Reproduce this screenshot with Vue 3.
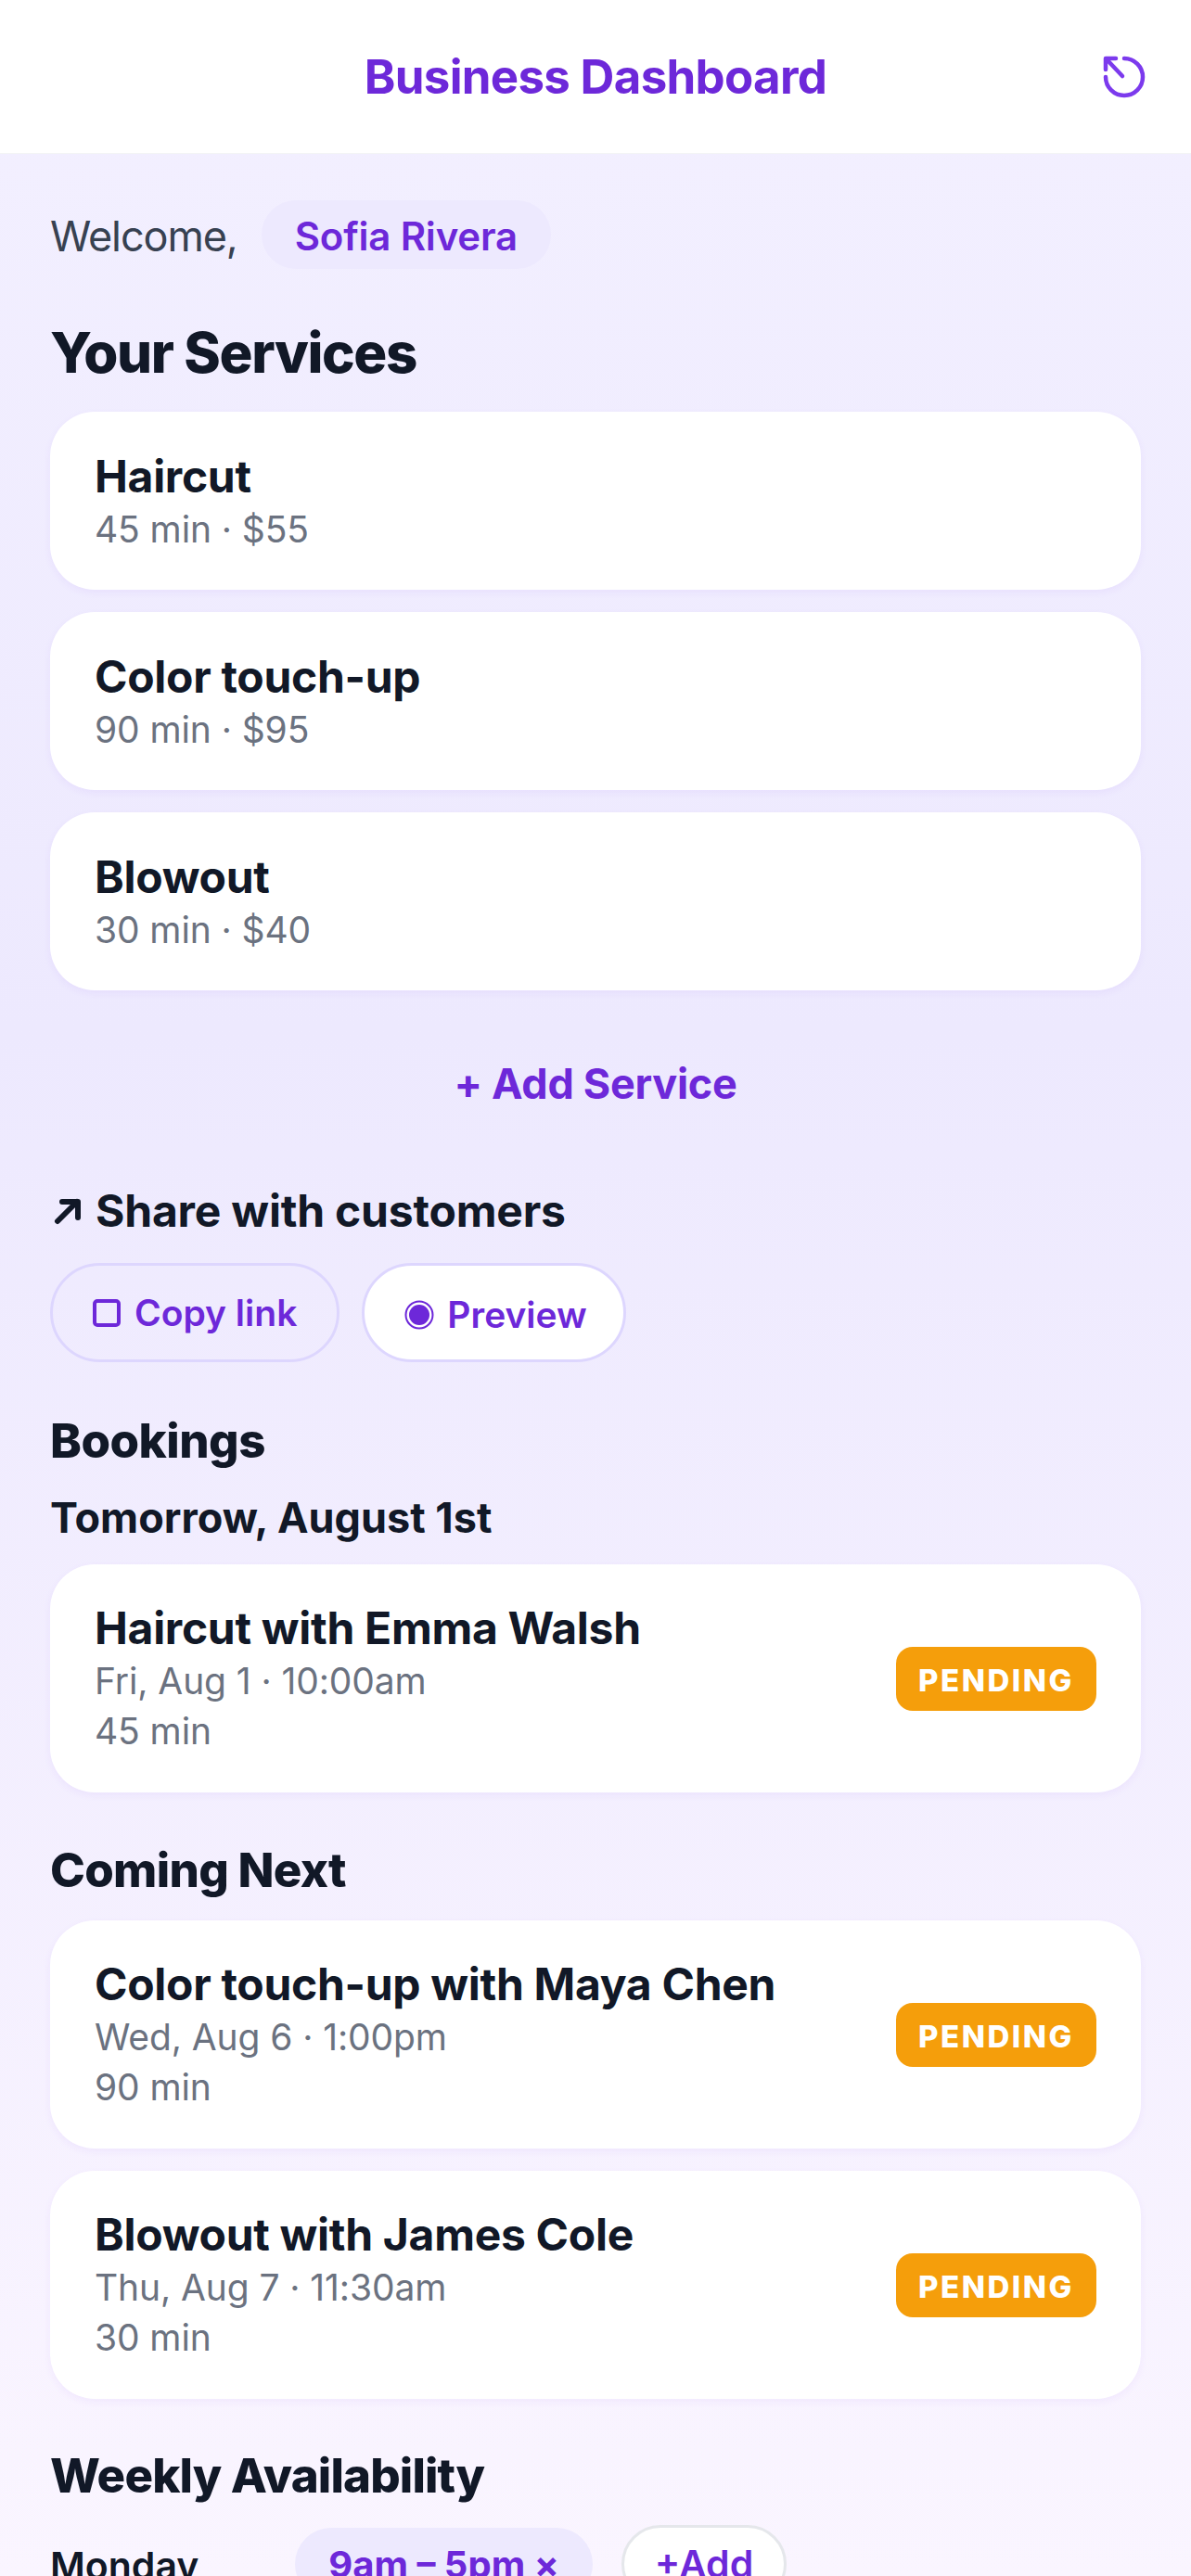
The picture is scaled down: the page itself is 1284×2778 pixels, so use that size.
<script setup>
const services = [
  { name: 'Haircut', meta: '45 min · $55' },
  { name: 'Color touch-up', meta: '90 min · $95' },
  { name: 'Blowout', meta: '30 min · $40' }
]

const nextBookings = [
  { title: 'Color touch-up with Maya Chen', date: 'Wed, Aug 6 · 1:00pm', length: '90 min' },
  { title: 'Blowout with James Cole', date: 'Thu, Aug 7 · 11:30am', length: '30 min' }
]
</script>

<template>
  <div class="page">
    <header class="topbar">
      <div class="topbar-title">Business Dashboard</div>
      <svg class="history" viewBox="0 0 48 48" fill="none" stroke="#7c3aed" stroke-width="4.500" stroke-linecap="round" stroke-linejoin="round">
        <path d="M24 5a20 20 0 1 1-20 20" />
        <path d="M22 24L5 6" />
        <path d="M4 17V5h11" />
      </svg>
    </header>

    <main class="content">
      <div class="welcome">
        <span class="welcome-label">Welcome,</span>
        <span class="name-pill">Sofia Rivera</span>
      </div>

      <h2 class="services-title">Your Services</h2>
      <div class="stack">
        <div class="card service" v-for="s in services" :key="s.name">
          <div class="card-title">{{ s.name }}</div>
          <div class="card-sub">{{ s.meta }}</div>
        </div>
      </div>

      <div class="add-service">+ Add Service</div>

      <div class="share-title">
        <svg class="share-arrow" viewBox="0 0 30 30" fill="none" stroke="#111827" stroke-width="6" stroke-linecap="round" stroke-linejoin="round">
          <path d="M4 26L25 5" />
          <path d="M9 5h17v17" />
        </svg>
        Share with customers
      </div>
      <div class="share-actions">
        <div class="share-btn">
          <svg class="btn-icon" viewBox="0 0 30 30" fill="none" stroke="#6d28d9" stroke-width="4">
            <rect x="2" y="2" width="26" height="26" rx="3" />
          </svg>
          Copy link
        </div>
        <div class="share-btn solid">
          <svg class="btn-icon" viewBox="0 0 32 32">
            <circle cx="16" cy="16" r="14.500" fill="none" stroke="#6d28d9" stroke-width="2" />
            <circle cx="16" cy="16" r="11" fill="#6d28d9" />
          </svg>
          Preview
        </div>
      </div>

      <h2 class="bookings-title">Bookings</h2>
      <h3 class="tomorrow">Tomorrow, August 1st</h3>
      <div class="card booking">
        <div>
          <div class="card-title">Haircut with Emma Walsh</div>
          <div class="card-sub">Fri, Aug 1 · 10:00am</div>
          <div class="card-sub second">45 min</div>
        </div>
        <span class="badge">PENDING</span>
      </div>

      <h3 class="coming">Coming Next</h3>
      <div class="stack">
        <div class="card booking" v-for="b in nextBookings" :key="b.title">
          <div>
            <div class="card-title">{{ b.title }}</div>
            <div class="card-sub">{{ b.date }}</div>
            <div class="card-sub second">{{ b.length }}</div>
          </div>
          <span class="badge">PENDING</span>
        </div>
      </div>

      <h2 class="weekly-title">Weekly Availability</h2>
      <div class="day-row">
        <span class="day">Monday</span>
        <span class="slot">9am – 5pm ×</span>
        <span class="slot-add">+Add</span>
      </div>
    </main>
  </div>
</template>

<style scoped>
.page {
  width: 1284px;
  height: 2778px;
  overflow: hidden;
  font-family: Inter, "Liberation Sans", sans-serif;
  color: #111827;
  background: linear-gradient(180deg, #f3f0ff 0%, #ede9fe 40%, #faf5ff 100%);
}
.topbar {
  height: 165px;
  background: #fff;
  border-bottom: 1px solid #f3f4f6;
  display: flex;
  align-items: center;
  justify-content: center;
  position: relative;
}
.topbar-title {
  font-size: 51px;
  font-weight: 700;
  letter-spacing: -0.7px;
  color: #6d28d9;
}
.history {
  position: absolute;
  right: 48px;
  top: 58px;
  width: 48px;
  height: 48px;
}
.content {
  padding: 50px 54px 0;
}
.welcome {
  display: flex;
  align-items: center;
  gap: 26px;
  height: 74px;
}
.welcome-label {
  font-size: 45px;
  letter-spacing: -1.1px;
  color: #374151;
  margin-top: 3px;
}
.name-pill {
  background: #ede9fe;
  color: #6d28d9;
  font-weight: 600;
  font-size: 42px;
  letter-spacing: -0.2px;
  line-height: 71px;
  padding: 3px 36px 0;
  border-radius: 37px;
}
h2, h3 {
  margin: 0;
}
.services-title {
  font-size: 60px;
  font-weight: 800;
  letter-spacing: -1.4px;
  line-height: 72px;
  margin-top: 54px;
  margin-bottom: 28px;
}
.stack {
  display: flex;
  flex-direction: column;
  gap: 24px;
}
.card {
  background: #fff;
  border-radius: 48px;
  box-shadow: 0 3px 9px rgba(124, 58, 237, 0.06);
  padding: 0 48px;
  box-sizing: border-box;
}
.service {
  height: 192px;
  padding-top: 40px;
}
.booking {
  height: 246px;
  display: flex;
  align-items: center;
  justify-content: space-between;
}
.card-title {
  font-size: 48px;
  font-weight: 700;
  letter-spacing: -0.3px;
  line-height: 60px;
}
.card-sub {
  font-size: 39px;
  letter-spacing: -0.1px;
  line-height: 54px;
  color: #6b7280;
}
.add-service {
  text-align: center;
  font-size: 45px;
  font-weight: 700;
  letter-spacing: -0.3px;
  color: #6d28d9;
  line-height: 60px;
  margin-top: 71px;
}
.share-title {
  display: flex;
  align-items: center;
  gap: 15px;
  font-size: 48px;
  font-weight: 700;
  letter-spacing: -0.2px;
  line-height: 60px;
  margin-top: 77px;
  padding-left: 4px;
}
.share-arrow {
  width: 30px;
  height: 30px;
  flex: none;
}
.share-actions {
  display: flex;
  gap: 24px;
  margin-top: 26px;
}
.share-btn {
  display: flex;
  align-items: center;
  gap: 15px;
  height: 107px;
  box-sizing: border-box;
  padding: 0 43px;
  border: 3px solid #ddd6fe;
  border-radius: 54px;
  color: #6d28d9;
  font-size: 39px;
  font-weight: 600;
}
.share-btn.solid {
  gap: 14px;
  background: #fff;
  padding: 4px 39px 0 43px;
}
.btn-icon {
  width: 30px;
  height: 30px;
  flex: none;
}
.solid .btn-icon {
  width: 32px;
  height: 32px;
}
.bookings-title {
  font-size: 51px;
  font-weight: 800;
  letter-spacing: -0.5px;
  line-height: 60px;
  margin-top: 55px;
}
.tomorrow {
  font-size: 45px;
  font-weight: 700;
  line-height: 54px;
  margin-top: 26px;
  margin-bottom: 23px;
}
.coming {
  font-size: 51px;
  font-weight: 800;
  letter-spacing: -0.7px;
  line-height: 60px;
  margin-top: 54px;
  margin-bottom: 24px;
}
.badge {
  width: 216px;
  height: 69px;
  line-height: 73px;
  text-align: center;
  background: #f59e0b;
  color: #fff;
  font-size: 33px;
  font-weight: 800;
  letter-spacing: 2.500px;
  border-radius: 18px;
  flex: none;
}
.weekly-title {
  font-size: 51px;
  font-weight: 800;
  letter-spacing: -0.85px;
  line-height: 60px;
  margin-top: 53px;
}
.day-row {
  display: flex;
  align-items: center;
  margin-top: 23px;
}
.day {
  width: 264px;
  margin-top: 3px;
  font-size: 41px;
  font-weight: 600;
}
.slot {
  width: 321px;
  height: 78px;
  line-height: 80px;
  text-align: center;
  background: #ede9fe;
  color: #6d28d9;
  font-size: 40px;
  font-weight: 700;
  border-radius: 39px;
}
.slot-add {
  width: 178px;
  height: 84px;
  line-height: 78px;
  box-sizing: border-box;
  text-align: center;
  margin-left: 31px;
  background: #fff;
  border: 3px solid #e5e7eb;
  border-radius: 42px;
  color: #6d28d9;
  font-size: 41px;
  font-weight: 600;
}
</style>
